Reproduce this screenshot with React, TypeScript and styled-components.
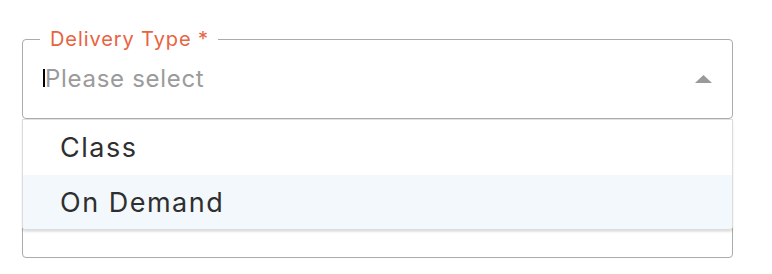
import React from "react";
import styled, { createGlobalStyle } from "styled-components";

const Global = createGlobalStyle`
  html, body { margin: 0; padding: 0; background: #ffffff; }
  body { font-family: "Inter", "Open Sans", sans-serif; }
`;

const Page = styled.div`
  padding: 39px 39px 0 22px;
  width: 772px;
  height: 274px;
  box-sizing: border-box;
`;

const SelectField = styled.div`
  position: relative;
  z-index: 2;
`;

const Control = styled.div`
  height: 80px;
  box-sizing: border-box;
  border: 1px solid #a7acac;
  border-radius: 4px;
  display: flex;
  align-items: center;
  padding: 0 20px 0 20px;
  background: #fff;
`;

const Legend = styled.span`
  position: absolute;
  top: -11px;
  left: 18px;
  padding: 0 9px 0 10px;
  background: #fff;
  color: #e8633f;
  font-size: 20px;
  line-height: 22px;
  letter-spacing: 0.9px;
`;

const Caret = styled.span`
  width: 2px;
  height: 18px;
  background: #000;
  margin-top: -2px;
  flex: none;
`;

const Placeholder = styled.span`
  flex: 1;
  color: #9b9b9b;
  font-size: 24px;
  letter-spacing: 0.7px;
  line-height: 1;
  margin-top: -1px;
`;

const Arrow = styled.svg`
  width: 17px;
  height: 8px;
  margin-top: -1px;
  flex: none;
`;

const Menu = styled.div`
  position: absolute;
  top: 100%;
  left: 0;
  right: 0;
  background: #fff;
  border: 1px solid #dcdcdc;
  border-top: 1px solid #e2e2e2;
  border-radius: 0 0 4px 4px;
  box-shadow: 0 2px 2px rgba(0, 0, 0, 0.12);
  overflow: hidden;
`;

const Option = styled.div<{ $active?: boolean; $h: number }>`
  height: ${(p) => p.$h}px;
  display: flex;
  align-items: center;
  padding-left: 37px;
  font-size: 27px;
  letter-spacing: 1.5px;
  color: #2f2f2f;
  background: ${(p) => (p.$active ? "#f3f8fc" : "#fff")};
`;

const NextField = styled.div`
  margin-top: 18px;
  height: 121px;
  box-sizing: border-box;
  border: 1px solid #a7acac;
  border-radius: 4px;
`;

export default function App() {
  return (
    <>
      <Global />
      <Page>
        <SelectField>
          <Control>
            <Legend>Delivery Type *</Legend>
            <Caret />
            <Placeholder>Please select</Placeholder>
            <Arrow viewBox="0 0 17 8">
              <polygon points="0,8 8.5,0 17,8" fill="#9a9a9a" />
            </Arrow>
          </Control>
          <Menu>
            <Option $h={55}>Class</Option>
            <Option $h={54} $active>On Demand</Option>
          </Menu>
        </SelectField>
        <NextField />
      </Page>
    </>
  );
}
